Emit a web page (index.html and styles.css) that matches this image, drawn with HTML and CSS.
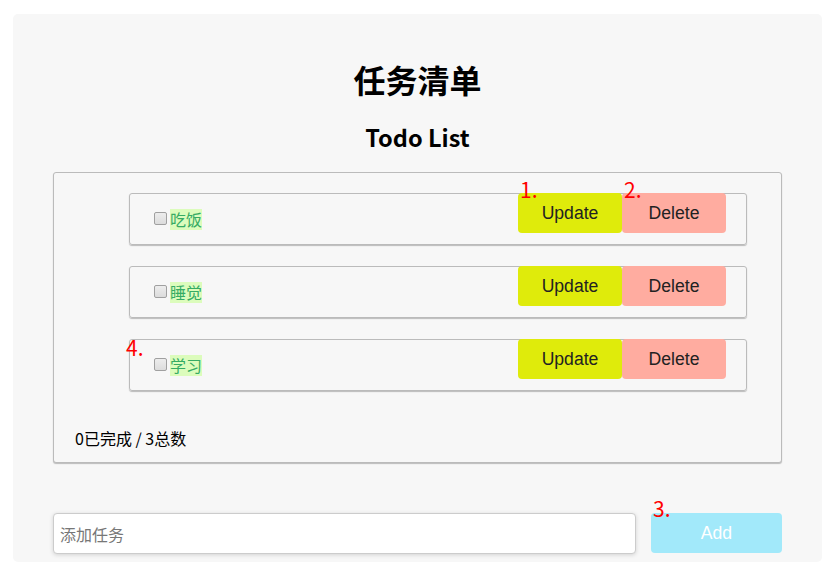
FILE: index.html
```html
<!DOCTYPE html>
<html lang="zh-CN">
<head>
<meta charset="utf-8">
<title>任务清单</title>
<link rel="stylesheet" href="styles.css">
</head>
<body>
<div class="app">
  <h1 class="title">任务清单</h1>
  <h2 class="subtitle">Todo List</h2>
  <div class="board">
    <ul class="list">
      <li class="item">
        <label class="task"><input type="checkbox" class="check"><span class="name">吃饭</span></label>
        <div class="actions">
          <button class="btn btn-update">Update<span class="mark mark-btn">1.</span></button>
          <button class="btn btn-delete">Delete<span class="mark mark-btn">2.</span></button>
        </div>
      </li>
      <li class="item">
        <label class="task"><input type="checkbox" class="check"><span class="name">睡觉</span></label>
        <div class="actions">
          <button class="btn btn-update">Update</button>
          <button class="btn btn-delete">Delete</button>
        </div>
      </li>
      <li class="item">
        <span class="mark mark-item">4.</span>
        <label class="task"><input type="checkbox" class="check"><span class="name">学习</span></label>
        <div class="actions">
          <button class="btn btn-update">Update</button>
          <button class="btn btn-delete">Delete</button>
        </div>
      </li>
    </ul>
    <div class="summary">0已完成 / 3总数</div>
  </div>
  <div class="add-row">
    <input class="add-input" type="text" placeholder="添加任务">
    <button class="btn btn-add">Add<span class="mark mark-add">3.</span></button>
  </div>
</div>
</body>
</html>
```
FILE: styles.css
```css
html, body {
  margin: 0;
  padding: 0;
  background: #ffffff;
}
body {
  padding: 14px 10px 0 13px;
  font-family: "Noto Sans CJK SC", "Noto Sans", sans-serif;
  color: #000;
}
.app {
  background: #f7f7f7;
  border-radius: 5px;
  padding: 0 40px 8px 40px;
  display: flex;
  flex-direction: column;
}
.title {
  margin: 45px 0 0 0;
  font-size: 32px;
  line-height: 40px;
  font-weight: 700;
  text-align: center;
}
.subtitle {
  margin: 22px 0 0 0;
  font-size: 23.5px;
  line-height: 32px;
  font-weight: 700;
  text-align: center;
}
.board {
  margin-top: 19px;
  border: 1px solid #bbbbbb;
  border-radius: 3px;
  box-shadow: 0 1px 1px #bbbbbb;
  background: #f7f7f7;
  padding-bottom: 13px;
}
.list {
  list-style: none;
  margin: 0;
  padding: 20px 34px 0 75px;
  display: flex;
  flex-direction: column;
  gap: 21px;
}
.item {
  position: relative;
  height: 52px;
  box-sizing: border-box;
  border: 1px solid #bbbbbb;
  border-radius: 3px;
  box-shadow: 0 1px 1px #bbbbbb;
  display: flex;
  align-items: center;
  justify-content: space-between;
  padding: 0 20px 0 24px;
}
.task {
  display: flex;
  align-items: center;
}
.check {
  appearance: none;
  -webkit-appearance: none;
  width: 13px;
  height: 13px;
  margin: -1px 3px 0 0;
  box-sizing: border-box;
  border: 1px solid #a0a0a0;
  border-radius: 2px;
  background: linear-gradient(#ededed, #dcdcdc);
}
.name {
  display: inline-block;
  font-size: 16px;
  line-height: 21px;
  background: #dcfcbc;
  color: #36ab64;
}
.actions {
  align-self: flex-start;
  margin-top: -1px;
  display: flex;
}
.btn {
  position: relative;
  border: none;
  border-radius: 4px;
  font-family: "Liberation Sans", Arial, sans-serif;
  font-size: 17.6px;
  color: #222222;
  padding: 0;
  cursor: pointer;
}
.btn-update {
  width: 104px;
  height: 40px;
  background: #dfeb0b;
}
.btn-delete {
  width: 104px;
  height: 40px;
  background: #ffaca0;
}
.summary {
  margin: 36px 0 0 21px;
  font-size: 16px;
  line-height: 22px;
}
.add-row {
  margin-top: 50px;
  display: flex;
  gap: 15px;
}
.add-input {
  flex: 1;
  height: 41px;
  box-sizing: border-box;
  border: 1px solid #cccccc;
  border-radius: 4px;
  box-shadow: 0 1px 4px rgba(0, 0, 0, 0.15);
  background: #ffffff;
  padding: 0 6px;
  font-family: "Noto Sans CJK SC", sans-serif;
  font-size: 16px;
  outline: none;
}
.add-input::placeholder {
  color: #777777;
}
.btn-add {
  width: 131px;
  height: 40px;
  background: #a2e9fa;
  color: #ffffff;
}
.mark {
  position: absolute;
  font-family: "Noto Sans CJK SC", sans-serif;
  font-size: 21px;
  line-height: 21px;
  color: #ff0000;
  pointer-events: none;
}
.mark-btn {
  left: 2px;
  top: -14px;
}
.mark-add {
  left: 2px;
  top: -15px;
}
.mark-item {
  left: -4px;
  top: -3px;
}
```
